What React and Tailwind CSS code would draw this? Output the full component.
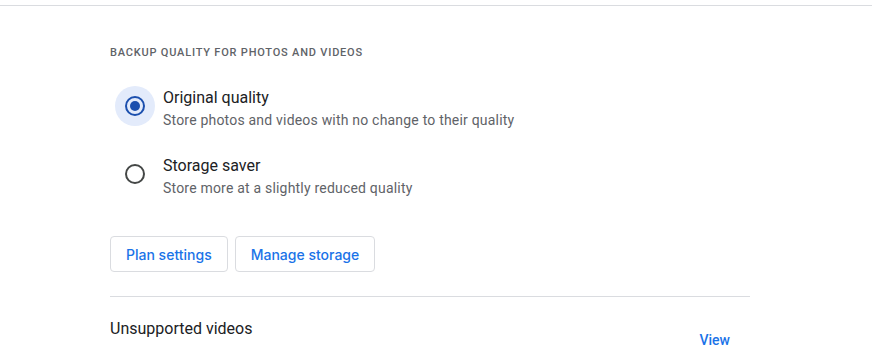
import React from 'react'

const roboto = { fontFamily: 'Roboto, "Liberation Sans", sans-serif' }

const Radio = ({ checked }) => (
  <div className={`w-10 h-10 rounded-full flex items-center justify-center shrink-0 ${checked ? 'bg-[#e3ebfb]' : ''}`}>
    <div className={`w-5 h-5 rounded-full border-2 flex items-center justify-center ${checked ? 'border-[#1b4fae]' : 'border-[#444746]'}`}>
      {checked && <div className="w-[10px] h-[10px] rounded-full bg-[#1b4fae]" />}
    </div>
  </div>
)

const Option = ({ checked, title, desc }) => (
  <div className="flex items-start gap-[8px]">
    <Radio checked={checked} />
    <div className="mt-[2px]">
      <div className="text-[16px] leading-[20px] text-[#202124]">{title}</div>
      <div className="text-[14px] leading-[20px] tracking-[0.2px] text-[#5f6368] mt-[2px]">{desc}</div>
    </div>
  </div>
)

export default function App() {
  return (
    <div className="w-[872px] h-[346px] overflow-hidden bg-white" style={roboto}>
      <div className="h-[5px]" />
      <div className="border-t border-[#dadce0]" />
      <div className="pl-[110px] w-[750px]">
        <div className="pt-[40px] text-[11px] leading-[14px] font-medium tracking-[0.8px] text-[#5f6368]">
          BACKUP QUALITY FOR PHOTOS AND VIDEOS
        </div>
        <div className="mt-[26px] ml-[5px] flex flex-col gap-[24px]">
          <Option checked title="Original quality" desc="Store photos and videos with no change to their quality" />
          <Option title="Storage saver" desc="Store more at a slightly reduced quality" />
        </div>
        <div className="mt-[38px] flex gap-[7px]" style={{ fontFamily: 'Inter, "Liberation Sans", sans-serif' }}>
          <button className="h-[36px] px-[15px] border border-[#dadce0] rounded-[4px] text-[14px] font-medium text-[#1a73e8]">Plan settings</button>
          <button className="h-[36px] px-[15px] border border-[#dadce0] rounded-[4px] text-[14px] font-medium text-[#1a73e8]">Manage storage</button>
        </div>
        <div className="mt-[24px] border-t border-[#dadce0]" />
        <div className="pt-[22px] flex items-start justify-between">
          <div>
            <div className="text-[16px] leading-[20px] text-[#202124]">Unsupported videos</div>
            <div className="text-[14px] leading-[20px] tracking-[0.2px] text-[#5f6368] mt-[3px]">Some videos can't be backed up or played</div>
          </div>
          <button className="mt-[11px] mr-[20px] text-[14px] font-medium text-[#1a73e8]">View</button>
        </div>
      </div>
    </div>
  )
}
